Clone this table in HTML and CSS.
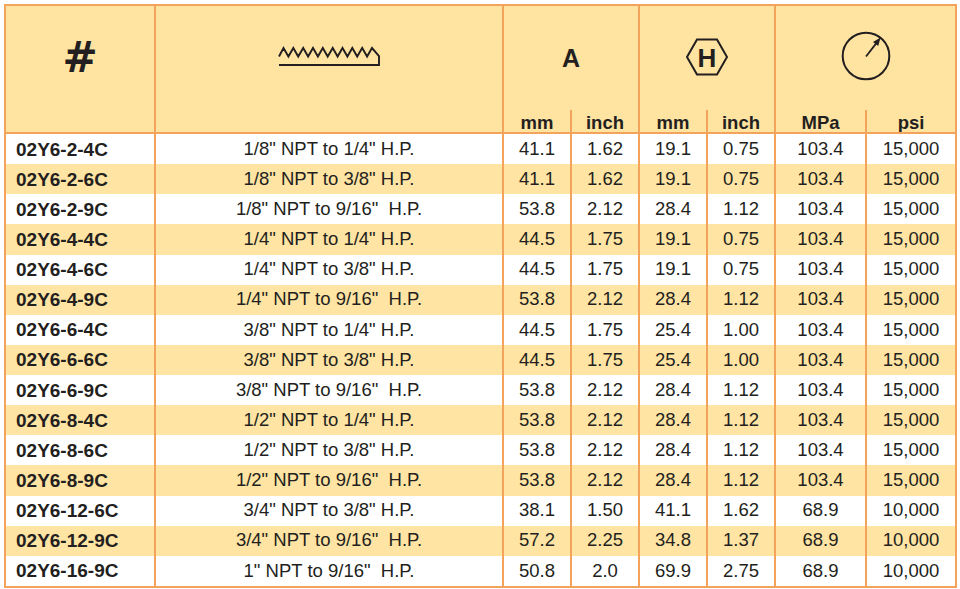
FILE: index.html
```html
<!DOCTYPE html>
<html>
<head>
<meta charset="utf-8">
<link rel="stylesheet" href="styles.css">
</head>
<body>
<div class="spec">
  <div class="hcell hspan"><span class="hash">#</span></div>
  <div class="hcell hspan">
    <svg class="thread" width="104" height="22" viewBox="0 0 104 22">
      <path d="M2 11.5 L6.5 3 L11.4 11.5 L16.3 3 L21.2 11.5 L26.2 3 L31.1 11.5 L36 3 L40.9 11.5 L45.8 3 L50.7 11.5 L55.7 3 L60.6 11.5 L65.5 3 L70.4 11.5 L75.3 3 L80.2 11.5 L85.2 3 L90.1 11.5 L95 3 L102 11 L102 20 L2 20" fill="none" stroke="#231f20" stroke-width="1.9" stroke-linejoin="miter"/>
    </svg>
  </div>
  <div class="hcell group"><span class="glabel">A</span></div>
  <div class="hcell group">
    <span class="hex">
      <svg width="44" height="38" viewBox="0 0 44 38">
        <polygon points="2,19 12,1.5 32,1.5 42,19 32,36.5 12,36.5" fill="none" stroke="#231f20" stroke-width="2"/>
      </svg>
      <span class="hexh">H</span>
    </span>
  </div>
  <div class="hcell group">
    <svg class="gauge" width="52" height="52" viewBox="0 0 52 52">
      <circle cx="26" cy="26" r="23.3" fill="none" stroke="#231f20" stroke-width="2"/>
      <line x1="26" y1="26.5" x2="36.2" y2="13.4" stroke="#231f20" stroke-width="1.8"/>
      <polygon points="40.6,7.6 38.2,15.9 33.0,11.9" fill="#231f20"/>
    </svg>
  </div>
  <div class="hcell sub">mm</div>
  <div class="hcell sub">inch</div>
  <div class="hcell sub">mm</div>
  <div class="hcell sub">inch</div>
  <div class="hcell sub">MPa</div>
  <div class="hcell sub">psi</div>
  <div class="hrule"></div>

  <div class="row"><div class="c pn">02Y6-2-4C</div><div class="c desc">1/8" NPT to 1/4" H.P.</div><div class="c">41.1</div><div class="c">1.62</div><div class="c">19.1</div><div class="c">0.75</div><div class="c">103.4</div><div class="c">15,000</div></div>
  <div class="row"><div class="c pn">02Y6-2-6C</div><div class="c desc">1/8" NPT to 3/8" H.P.</div><div class="c">41.1</div><div class="c">1.62</div><div class="c">19.1</div><div class="c">0.75</div><div class="c">103.4</div><div class="c">15,000</div></div>
  <div class="row"><div class="c pn">02Y6-2-9C</div><div class="c desc">1/8" NPT to 9/16"  H.P.</div><div class="c">53.8</div><div class="c">2.12</div><div class="c">28.4</div><div class="c">1.12</div><div class="c">103.4</div><div class="c">15,000</div></div>
  <div class="row"><div class="c pn">02Y6-4-4C</div><div class="c desc">1/4" NPT to 1/4" H.P.</div><div class="c">44.5</div><div class="c">1.75</div><div class="c">19.1</div><div class="c">0.75</div><div class="c">103.4</div><div class="c">15,000</div></div>
  <div class="row"><div class="c pn">02Y6-4-6C</div><div class="c desc">1/4" NPT to 3/8" H.P.</div><div class="c">44.5</div><div class="c">1.75</div><div class="c">19.1</div><div class="c">0.75</div><div class="c">103.4</div><div class="c">15,000</div></div>
  <div class="row"><div class="c pn">02Y6-4-9C</div><div class="c desc">1/4" NPT to 9/16"  H.P.</div><div class="c">53.8</div><div class="c">2.12</div><div class="c">28.4</div><div class="c">1.12</div><div class="c">103.4</div><div class="c">15,000</div></div>
  <div class="row"><div class="c pn">02Y6-6-4C</div><div class="c desc">3/8" NPT to 1/4" H.P.</div><div class="c">44.5</div><div class="c">1.75</div><div class="c">25.4</div><div class="c">1.00</div><div class="c">103.4</div><div class="c">15,000</div></div>
  <div class="row"><div class="c pn">02Y6-6-6C</div><div class="c desc">3/8" NPT to 3/8" H.P.</div><div class="c">44.5</div><div class="c">1.75</div><div class="c">25.4</div><div class="c">1.00</div><div class="c">103.4</div><div class="c">15,000</div></div>
  <div class="row"><div class="c pn">02Y6-6-9C</div><div class="c desc">3/8" NPT to 9/16"  H.P.</div><div class="c">53.8</div><div class="c">2.12</div><div class="c">28.4</div><div class="c">1.12</div><div class="c">103.4</div><div class="c">15,000</div></div>
  <div class="row"><div class="c pn">02Y6-8-4C</div><div class="c desc">1/2" NPT to 1/4" H.P.</div><div class="c">53.8</div><div class="c">2.12</div><div class="c">28.4</div><div class="c">1.12</div><div class="c">103.4</div><div class="c">15,000</div></div>
  <div class="row"><div class="c pn">02Y6-8-6C</div><div class="c desc">1/2" NPT to 3/8" H.P.</div><div class="c">53.8</div><div class="c">2.12</div><div class="c">28.4</div><div class="c">1.12</div><div class="c">103.4</div><div class="c">15,000</div></div>
  <div class="row"><div class="c pn">02Y6-8-9C</div><div class="c desc">1/2" NPT to 9/16"  H.P.</div><div class="c">53.8</div><div class="c">2.12</div><div class="c">28.4</div><div class="c">1.12</div><div class="c">103.4</div><div class="c">15,000</div></div>
  <div class="row"><div class="c pn">02Y6-12-6C</div><div class="c desc">3/4" NPT to 3/8" H.P.</div><div class="c">38.1</div><div class="c">1.50</div><div class="c">41.1</div><div class="c">1.62</div><div class="c">68.9</div><div class="c">10,000</div></div>
  <div class="row"><div class="c pn">02Y6-12-9C</div><div class="c desc">3/4" NPT to 9/16"  H.P.</div><div class="c">57.2</div><div class="c">2.25</div><div class="c">34.8</div><div class="c">1.37</div><div class="c">68.9</div><div class="c">10,000</div></div>
  <div class="row"><div class="c pn">02Y6-16-9C</div><div class="c desc">1" NPT to 9/16"  H.P.</div><div class="c">50.8</div><div class="c">2.0</div><div class="c">69.9</div><div class="c">2.75</div><div class="c">68.9</div><div class="c">10,000</div></div>
</div>
</body>
</html>
```

FILE: styles.css
```css
html, body {
  margin: 0;
  padding: 0;
  background: #ffffff;
}

body {
  font-family: "Liberation Sans", Arial, sans-serif;
  color: #231f20;
}

.spec {
  margin: 4px 0 0 4px;
  display: grid;
  width: max-content;
  grid-template-columns: 148px 346px 66px 66px 66px 66px 89px 88px;
  grid-template-rows: 104px 22px 2px repeat(15, 30.13px);
  column-gap: 2px;
  background: #f3a35c;
  border: 2px solid #f3a35c;
}

.hcell {
  background: #ffe3a1;
  display: flex;
  align-items: center;
  justify-content: center;
  font-weight: bold;
}

.hspan {
  grid-row: span 2;
  padding-bottom: 22px;
}

.group {
  grid-column: span 2;
}

.hash {
  font-family: "DejaVu Sans", sans-serif;
  font-weight: bold;
  font-size: 42px;
  line-height: 1;
}

.thread {
  display: block;
  margin-bottom: 5px;
}

.glabel {
  font-size: 25px;
  line-height: 1;
}

.hex {
  display: inline-grid;
  place-items: center;
  margin-bottom: 2px;
}

.hex > svg,
.hex > .hexh {
  grid-area: 1 / 1;
}

.hex > svg {
  display: block;
}

.hexh {
  font-size: 26px;
  line-height: 1;
  margin-top: 1px;
}

.gauge {
  display: block;
  margin-bottom: 4px;
}

.sub {
  font-size: 18.5px;
  line-height: 1;
  align-items: flex-end;
}

.hrule {
  grid-column: 1 / -1;
  background: #f3a35c;
}

.row {
  display: contents;
}

.c {
  background: #ffffff;
  display: flex;
  align-items: center;
  justify-content: center;
  font-size: 18.5px;
  line-height: 1;
}

.row:nth-of-type(even) > .c {
  background: #ffe4a3;
}

.pn {
  justify-content: flex-start;
  padding-left: 10px;
  font-weight: bold;
  font-size: 19px;
}

.desc {
  white-space: pre;
}
```
